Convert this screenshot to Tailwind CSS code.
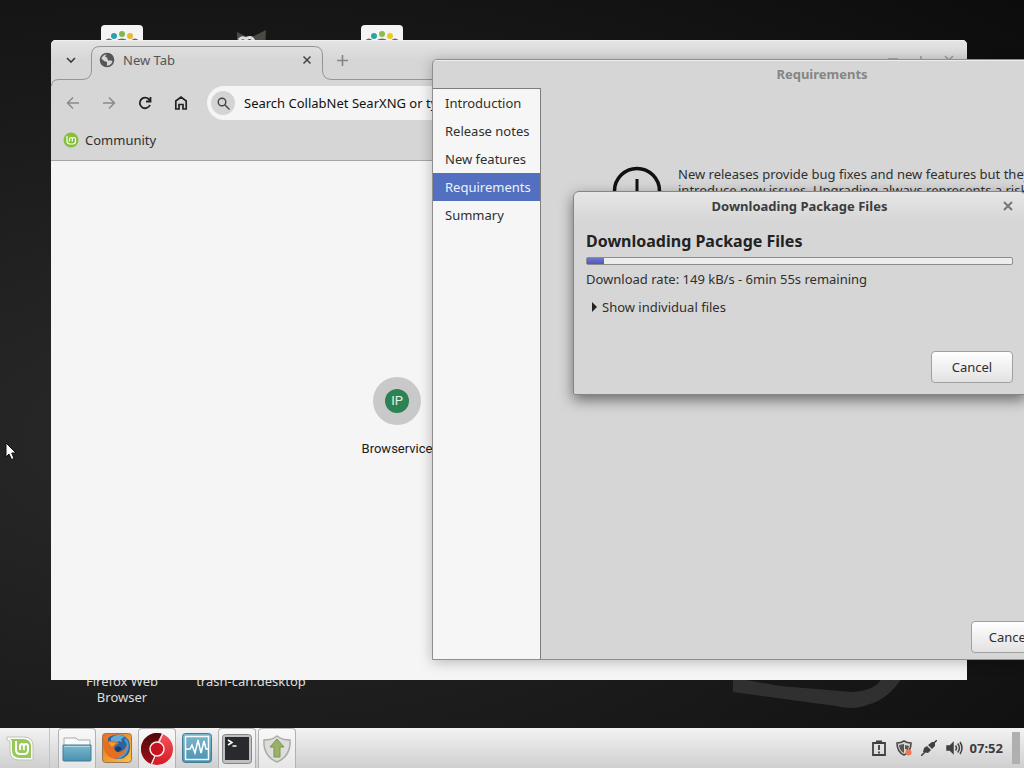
<!DOCTYPE html>
<html lang="en">
<head>
  <meta charset="UTF-8">
  <meta name="viewport" content="width=device-width, initial-scale=1.0">
  <title>Desktop</title>
  <script src="https://cdn.jsdelivr.net/npm/@tailwindcss/browser@4"></script>
</head>
<body class="h-screen overflow-hidden bg-[#161616] font-['Noto_Sans','Open_Sans',sans-serif] text-[13px] leading-4 text-[#2f2f2f]">
  <div class="flex h-full flex-col">

    <!-- Desktop -->
    <main class="relative flex-1 overflow-hidden bg-[radial-gradient(ellipse_at_20%_60%,#2a2a2a_0%,#202020_35%,#171717_65%,#0c0c0c_100%)]">
      <svg class="absolute top-[670px] left-[730px]" width="180" height="42" viewBox="0 0 180 42">
        <path d="M3 8 L3 22 L106 36 Q124 41 140 34 Q158 29 172 8 L152 8 Q145 21 122 22 L50 16 L16 10 Z" fill="#303030"/>
      </svg>

      <!-- Desktop icons -->
      <div class="absolute top-[25px] left-[101px] h-10 w-[42px] rounded-sm bg-[#f4f4f4]">
        <svg width="42" height="40" viewBox="0 0 42 40">
          <circle cx="13" cy="11" r="3" fill="#2d9fb0"/><circle cx="21" cy="9" r="3" fill="#80b849"/><circle cx="29" cy="11" r="3" fill="#ecb731"/>
          <path d="M5 16q3-3 6 0M16 16q5-3 10 0M31 16q3-3 6 0" fill="none" stroke="#666" stroke-width="2"/>
        </svg>
      </div>
      <svg class="absolute top-[25px] left-[228px]" width="42" height="30" viewBox="0 0 42 30">
        <path d="M9 7 L17 11 L26 11 L38 5 L37 24 L9 24 Z" fill="#4a4944"/>
        <path d="M11 15q3-4 7-1q5-4 8 2" fill="none" stroke="#ddd" stroke-width="3"/>
      </svg>
      <div class="absolute top-[25px] left-[361px] h-10 w-[42px] rounded-sm bg-[#f4f4f4]">
        <svg width="42" height="40" viewBox="0 0 42 40">
          <circle cx="13" cy="11" r="3" fill="#2aa79c"/><circle cx="21" cy="9" r="3" fill="#8fba49"/><circle cx="29" cy="11" r="3" fill="#e9c926"/>
          <path d="M5 16q3-3 6 0M16 16q5-3 10 0M31 16q3-3 6 0" fill="none" stroke="#666" stroke-width="2"/>
        </svg>
      </div>
      <p class="absolute top-[673px] left-[72px] w-[100px] text-center text-[#dedede]">Firefox Web Browser</p>
      <p class="absolute top-[673px] left-[191px] w-[120px] text-center text-[#dedede]">trash-can.desktop</p>

      <!-- Browser window -->
      <section class="absolute top-10 left-[51px] flex h-[640px] w-[916px] flex-col overflow-hidden rounded-t-[5px] bg-[#f5f5f5]">
        <header class="relative border-b border-[#a5a5a5] bg-[#d6d6d6]">
          <svg class="absolute top-0 left-0" width="916" height="46" viewBox="0 0 916 46" fill="none">
            <defs>
              <linearGradient id="strip" x1="0" y1="0" x2="0" y2="1">
                <stop offset="0" stop-color="#e4e4e4"/><stop offset="1" stop-color="#d6d6d6"/>
              </linearGradient>
            </defs>
            <path d="M0 0H916V20H0Z" fill="url(#strip)"/>
            <path d="M0 .5H916" stroke="#f0f0f0"/>
            <path d="M.5 46Q.5 39.500 8 39.500H31Q40.500 39.500 40.500 30V15Q40.500 6.500 49 6.500H263Q271.500 6.500 271.500 15V30Q271.500 39.500 281 39.500H916" stroke="#949494"/>
          </svg>
          <div class="relative flex h-10 items-center">
            <button class="flex w-10 justify-center" aria-label="Search tabs">
              <svg width="10" height="10" viewBox="0 0 10 10" fill="none" stroke="#3c3c3c" stroke-width="1.600"><path d="M1 3l4 4 4-4"/></svg>
            </button>
            <div class="flex w-[232px] items-center pr-[11px] pl-2">
              <svg width="16" height="16" viewBox="0 0 16 16">
                <circle cx="8" cy="8" r="6.500" fill="#d6d6d6" stroke="#565656" stroke-width="1.600"/>
                <path d="M2 7q2 0 3 2l3 1v3l-1 2Q2 13 1.500 8ZM8 1.500l-2 3 2 1 1 3 3 0 2 1Q16 3 9 1Z" fill="#565656"/>
              </svg>
              <span class="ml-2 flex-1 text-[#555]">New Tab</span>
              <button aria-label="Close tab">
                <svg width="10" height="10" viewBox="0 0 10 10" stroke="#444" stroke-width="1.500"><path d="M1.500 1.500l7 7M8.500 1.500l-7 7"/></svg>
              </button>
            </div>
            <button class="ml-[14px]" aria-label="New tab">
              <svg width="11" height="11" viewBox="0 0 11 11" stroke="#858585" stroke-width="1.600"><path d="M5.500 0v11M0 5.500h11"/></svg>
            </button>
            <div class="ml-auto flex items-end gap-[18px] pr-[13px] text-[#9a9a9a]">
              <svg width="10" height="10" viewBox="0 0 10 10" stroke="currentColor" stroke-width="1.500"><path d="M0 4h10"/></svg>
              <svg width="10" height="10" viewBox="0 0 10 10" stroke="currentColor" stroke-width="1.500"><path d="M5 1v8M1 5h8"/></svg>
              <svg width="10" height="10" viewBox="0 0 10 10" stroke="currentColor" stroke-width="1.500"><path d="M1 1l8 8M9 1l-8 8"/></svg>
            </div>
          </div>
          <div class="flex h-[46px] items-center pl-[14px]">
            <div class="flex gap-5">
              <button aria-label="Back"><svg width="16" height="16" viewBox="0 0 16 16" fill="none" stroke="#8a8a8a" stroke-width="1.500"><path d="M14 8H3M8 2.500L2.500 8 8 13.500"/></svg></button>
              <button aria-label="Forward"><svg width="16" height="16" viewBox="0 0 16 16" fill="none" stroke="#8a8a8a" stroke-width="1.500"><path d="M2 8h11M8 2.500L13.500 8 8 13.500"/></svg></button>
              <button aria-label="Reload"><svg width="16" height="16" viewBox="0 0 16 16" fill="none" stroke="#222" stroke-width="1.800"><path d="M13 10A5.300 5.300 0 1 1 12 4.300L13.500 6M13.500 2v4.500H9"/></svg></button>
              <button aria-label="Home"><svg width="16" height="16" viewBox="0 0 16 16" fill="none" stroke="#222" stroke-width="1.700"><path d="M2.800 14V6L8 2l5.200 4v8H10V9.500H6V14Z"/></svg></button>
            </div>
            <label class="ml-[18px] flex h-[34px] flex-1 items-center rounded-full bg-[#f5f5f5] pl-1">
              <span class="flex size-6 items-center justify-center rounded-full bg-[#d4d4d4]">
                <svg width="13" height="13" viewBox="0 0 13 13" fill="none" stroke="#444" stroke-width="1.400"><circle cx="5" cy="5" r="3.800"/><path d="M8 8l4.500 4.500"/></svg>
              </span>
              <input type="text" aria-label="Address" placeholder="Search CollabNet SearXNG or type a URL" class="ml-[9px] flex-1 text-[13px] text-[#111] outline-none placeholder:text-[#111]">
            </label>
          </div>
          <div class="flex h-[34px] items-start pt-[6px] pl-3">
            <a href="#" class="flex items-center gap-[6px]">
              <svg width="16" height="16" viewBox="0 0 16 16" fill="none">
                <circle cx="8" cy="8" r="7.500" fill="#86bf3c"/>
                <path d="M4 4v5q0 3 3 3h3q2.500 0 2.500-3V7q0-1.500-1.500-1.500T9.300 7v2.500M9.300 7Q9.300 5.500 8 5.500T6.500 7v2.500" stroke="#fff" stroke-width="1.200"/>
              </svg>
              Community
            </a>
          </div>
        </header>
        <a href="#" class="mt-[216px] ml-[290px] flex w-28 flex-col items-center gap-4 font-[Roboto,sans-serif] text-[#202020]">
          <span class="flex size-12 items-center justify-center rounded-full bg-[#c9c9c9]">
            <span class="flex size-6 items-center justify-center rounded-full bg-[#2c8253] text-[#e1f2e5]">IP</span>
          </span>
          Browservice
        </a>
      </section>

      <!-- Upgrade assistant window -->
      <section class="absolute top-[59px] left-[432px] flex h-[601px] w-[780px] flex-col overflow-hidden rounded-t-[5px] border border-[#8f8f8f] bg-[#d6d6d6] shadow-[0_2px_14px_rgba(0,0,0,0.25)]">
        <h1 class="h-7 border-t border-[#ececec] pt-[5px] text-center font-bold text-[#858585]">Requirements</h1>
        <div class="flex flex-1">
          <nav class="w-[108px] border-t border-r border-[#7d7d7d] bg-[#f6f6f6]">
            <a href="#" class="block h-7 pt-[6px] pl-3">Introduction</a>
            <a href="#" class="block h-7 pt-[6px] pl-3">Release notes</a>
            <a href="#" class="block h-7 pt-[6px] pl-3">New features</a>
            <a href="#" class="block h-7 bg-[#5270bf] pt-[6px] pl-3 text-[#edf1fc]">Requirements</a>
            <a href="#" class="block h-7 pt-[6px] pl-3">Summary</a>
          </nav>
          <div class="flex flex-1 flex-col justify-between pt-[78px] pb-[6px]">
            <div class="flex gap-4 pl-[71px]">
              <svg width="50" height="50" viewBox="0 0 50 50" fill="none" stroke="#111"><circle cx="25" cy="25" r="22.500" stroke-width="3.500"/><path d="M25 13v16M25 33v4" stroke-width="3"/></svg>
              <p class="whitespace-nowrap">New releases provide bug fixes and new features but they<br>introduce new issues. Upgrading always represents a risk.</p>
            </div>
            <button class="ml-[430px] h-8 w-[76px] rounded-sm border border-[#a0a0a0] bg-linear-to-b from-white to-[#e2e2e2]">Cancel</button>
          </div>
        </div>
      </section>

      <!-- Download dialog -->
      <section role="dialog" class="absolute top-[191px] left-[573px] flex h-[204px] w-[453px] flex-col rounded-t-[6px] rounded-b-[2px] border border-[#858585] bg-linear-to-b from-[#e6e6e6] to-[#d6d6d6] to-[30px] px-3 shadow-[0_5px_14px_rgba(0,0,0,0.5)]">
        <div class="flex h-7 items-center">
          <h2 class="flex-1 pl-[10px] text-center font-bold text-[#3c3c3c]">Downloading Package Files</h2>
          <button aria-label="Close"><svg width="10" height="10" viewBox="0 0 10 10" stroke="#777" stroke-width="2"><path d="M1 1l8 8M9 1l-8 8"/></svg></button>
        </div>
        <h3 class="mt-[9px] text-base leading-6 font-bold text-[#222]">Downloading Package Files</h3>
        <div role="progressbar" aria-valuenow="4" class="mt-1 h-2 shrink-0 rounded-xs border border-[#8d8d8d] bg-[#ededed]">
          <div class="h-full bg-linear-to-b from-[#7277cb] to-[#5258b8]" style="width: 4%"></div>
        </div>
        <p class="mt-[6px]">Download rate: 149 kB/s - 6min 55s remaining</p>
        <button class="mt-3 flex items-center gap-[5px] pl-[6px]">
          <svg width="5" height="10" viewBox="0 0 5 10" fill="#222"><path d="M0 0l5 5-5 5Z"/></svg>
          Show individual files
        </button>
        <button class="mt-auto mb-[11px] h-8 w-[82px] self-end rounded-sm border border-[#a0a0a0] bg-linear-to-b from-white to-[#e2e2e2]">Cancel</button>
      </section>

      <!-- Pointer -->
      <svg class="absolute top-[442px] left-[5px]" width="12" height="19" viewBox="0 0 12 19"><path d="M1 1v14l3-3 2.500 5.500 2.500-1L6.700 11H11Z" fill="#fff" stroke="#111"/></svg>
    </main>

    <!-- Panel -->
    <footer class="flex h-10 items-center bg-linear-to-b from-[#f3f3f3] to-[#cfcfcf]">
      <button class="flex h-full w-[50px] items-center border-r border-[#c4c4c4] pl-[5px]" aria-label="Menu">
        <svg width="32" height="32" viewBox="0 0 32 32" fill="none">
          <path d="M2 5H19Q28 5 28 14V28H14Q5 28 5 19V11Q5 8 2 8Z" fill="#fafafa" stroke="#bcc7ae"/>
          <path d="M5 7H18Q26 7 26 15V26H15Q7 26 7 18V10Q7 8 5 7Z" fill="#98c75a"/>
          <path d="M11 9v8.500Q11 22 15 22h4q4 0 4-4v-3.500q0-2.500-2-2.500t-2.200 2.500V18M18.800 14.500Q18.800 12 17 12t-2 2.500V18" stroke="#fff" stroke-width="2"/>
        </svg>
      </button>
      <div class="flex h-full gap-[2px] pl-2">
        <button class="flex w-[38px] items-center justify-center rounded-t-sm border border-b-0 border-[#b2b2b2] bg-linear-to-b from-[#f8f8f8] to-[#e6e6e6]" aria-label="Files">
          <svg width="30" height="28" viewBox="0 0 30 28">
            <path d="M2 3h12l2 2h12v8H2Z" fill="#fafafa" stroke="#aaa"/>
            <path d="M1 10h28v15q0 1-1 1H2q-1 0-1-1Z" fill="url(#blue)" stroke="#407b96"/>
            <path d="M2 11.500h26" stroke="#b3dae8"/>
          </svg>
        </button>
        <button class="flex w-[38px] items-center justify-center" aria-label="Firefox">
          <svg width="30" height="30" viewBox="0 0 30 30">
            <defs><linearGradient id="fox" x2="1" y2="1"><stop stop-color="#e96c21"/><stop offset="1" stop-color="#f6c544"/></linearGradient></defs>
            <rect x=".5" y=".5" width="29" height="29" rx="3" fill="url(#fox)" stroke="#9b7553"/>
            <path d="M6 5Q12 0 20 2q8 3 8 12 0 10-10 12Q8 27 5 17Z" fill="#2b659f"/>
            <path d="M9 5q7-6 14-1-5 1-3 5-4-2-6 1l-5-1Z" fill="#61acd7"/>
            <path d="M1 5Q3 9 8 8q6-1 9 3-4 0-5 4 1 5 6 4 5-2 7-7 1 9-6 12-7 4-13-1Q1 18 1 10Z" fill="#e56f20"/>
            <path d="M7 9l7 1-3 3q-3 1-4-4Z" fill="#e9a03d"/>
            <path d="M13 15l4-2 3 3-4 3q-3-1-3-4Z" fill="#183c72"/>
            <path d="M23 6q5 6 1 13-3 5-8 6" stroke="#5c9bcb" stroke-width="2" fill="none"/>
          </svg>
        </button>
        <button class="flex w-[38px] items-center justify-center rounded-t-sm border border-b-0 border-[#b2b2b2] bg-linear-to-b from-[#f8f8f8] to-[#e6e6e6]" aria-label="Chromium">
          <svg width="32" height="32" viewBox="0 0 32 32">
            <defs>
              <linearGradient id="wine" x2="0" y2="1"><stop stop-color="#4c080b"/><stop offset="1" stop-color="#a01019"/></linearGradient>
              <linearGradient id="red" x2="0" y2="1"><stop stop-color="#f5565c"/><stop offset="1" stop-color="#d71925"/></linearGradient>
            </defs>
            <circle cx="16" cy="16" r="16" fill="url(#red)"/>
            <path d="M21 .8A16 16 0 1 0 11 31.200L16 23V9Z" fill="url(#wine)"/>
            <path d="M18 9L21.500 1M14 23L10.500 31" stroke="#f5e9e9" stroke-width="1.500"/>
            <circle cx="16" cy="16" r="7" fill="#c81420" stroke="#fae9e9" stroke-width="1.500"/>
          </svg>
        </button>
        <button class="flex w-[38px] items-center justify-center" aria-label="System monitor">
          <svg width="30" height="30" viewBox="0 0 30 30" fill="none">
            <defs><linearGradient id="blue" x2="0" y2="1"><stop stop-color="#7db8ce"/><stop offset="1" stop-color="#4a91b0"/></linearGradient></defs>
            <rect x=".5" y=".5" width="29" height="29" rx="3" fill="url(#blue)" stroke="#447c95"/>
            <rect x="3.500" y="3.500" width="23" height="23" stroke="#f3fafc" stroke-width="1.500"/>
            <path d="M4 16h4l2-4 3 8 3-13 3 13 3-12 2 8h3" stroke="#fff" stroke-width="1.500"/>
          </svg>
        </button>
        <button class="flex w-[38px] items-center justify-center rounded-t-sm border border-b-0 border-[#b2b2b2] bg-linear-to-b from-[#f8f8f8] to-[#e6e6e6]" aria-label="Terminal">
          <svg width="30" height="30" viewBox="0 0 30 30" fill="none">
            <rect x=".5" y=".5" width="29" height="29" rx="3" fill="#bfbfbf" stroke="#858585"/>
            <rect x="3" y="3" width="24" height="23" fill="#282a2e"/>
            <path d="M6 6l4 2.500-4 2.500M10.500 12h4" stroke="#fff" stroke-width="1.500"/>
          </svg>
        </button>
        <button class="flex w-[38px] items-center justify-center rounded-t-sm border border-b-0 border-[#b2b2b2] bg-linear-to-b from-[#f8f8f8] to-[#e6e6e6]" aria-label="Update manager">
          <svg width="30" height="30" viewBox="0 0 30 30">
            <path d="M15 2Q20 6 28 6q1 16-13 22Q1 22 2 6 10 6 15 2Z" fill="#dcdedb" stroke="#a9aca7" stroke-width="1.500"/>
            <path d="M15 5l7 8h-4v10h-6V13H8Z" fill="#9ab266" stroke="#7d9456"/>
          </svg>
        </button>
      </div>
      <div class="ml-auto flex h-full items-center">
        <div class="flex items-center gap-[9px] pr-[7px]">
          <svg width="16" height="16" viewBox="0 0 16 16" fill="none" stroke="#404040" stroke-width="1.800"><path d="M2 3h12v12H2ZM5 1.500h6M8 5v5M8 11.500v2"/></svg>
          <svg width="16" height="16" viewBox="0 0 16 16"><path d="M8 1q3 2 7 2 0 9-7 12Q1 12 1 3q4 0 7-2Z" fill="#d6d6d6" stroke="#4b4744" stroke-width="1.600"/><path d="M8 4v9Q3 10 3 5ZM9 5l4 1-1 4-3-1Z" fill="#5b5550"/><circle cx="12.500" cy="12.500" r="3" fill="#ef7854"/></svg>
          <svg width="16" height="16" viewBox="0 0 16 16" fill="#404040" stroke="#404040"><path d="M0 16l4-4M12 4l4-4" stroke-width="1.500"/><path d="M2 12l1-4 3-2 4 4-3 3ZM7 5l4-3 3 0 0 4-3 3Z" stroke="none"/></svg>
          <svg width="17" height="16" viewBox="0 0 17 16" fill="none" stroke="#404040" stroke-width="1.500"><path d="M1 6h3l3-3v10l-3-3H1Z" fill="#404040"/><path d="M9.500 5.500q2 2.500 0 5M11.700 3.500q3.500 4.500 0 9M14 2q4 6 0 12"/></svg>
        </div>
        <time class="pr-[9px] font-bold text-[#3c3c3c]">07:52</time>
        <div class="h-8 w-2 bg-[#b0b0b0]"></div>
        <div class="w-1"></div>
      </div>
    </footer>
  </div>
</body>
</html>
